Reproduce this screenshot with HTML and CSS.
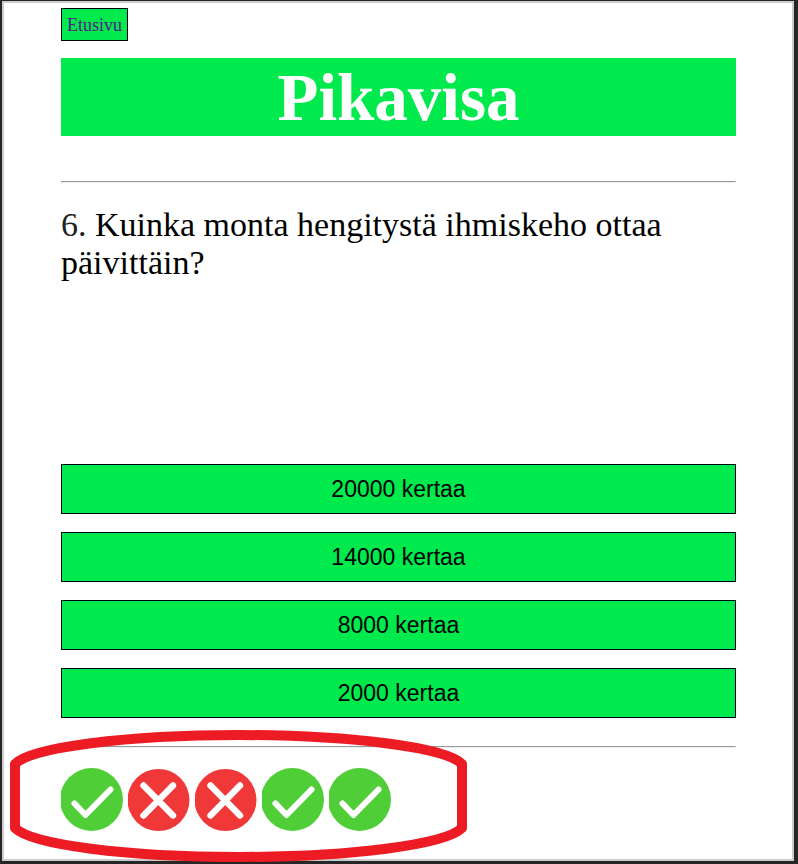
FILE: index.html
```html
<!DOCTYPE html>
<html lang="fi">
<head>
<meta charset="utf-8">
<title>Pikavisa</title>
<link rel="stylesheet" href="styles.css">
</head>
<body>
<svg class="symbols" aria-hidden="true">
  <symbol id="right" viewBox="0 0 62 63">
    <circle cx="30.500" cy="31.500" r="31.500" fill="#4fce37"/>
    <path d="M13.500 35.500 24.500 47 49.500 21.500" fill="none" stroke="#fff" stroke-width="6" stroke-linecap="round" stroke-linejoin="round"/>
  </symbol>
  <symbol id="wrong" viewBox="0 0 62 63">
    <circle cx="30.500" cy="32" r="31" fill="#f03838"/>
    <path d="M15.500 17.500 45 47.500M45 17.500 15.500 47.500" fill="none" stroke="#fff" stroke-width="6.400" stroke-linecap="round"/>
  </symbol>
</svg>
<div class="page">
  <nav><a class="home" href="#">Etusivu</a></nav>
  <h1 class="title">Pikavisa</h1>
  <hr>
  <main>
    <p class="question"><span class="number">6.</span> Kuinka monta hengitystä ihmiskeho ottaa päivittäin?</p>
    <div class="answers">
      <button class="answer" type="button">20000 kertaa</button>
      <button class="answer" type="button">14000 kertaa</button>
      <button class="answer" type="button">8000 kertaa</button>
      <button class="answer" type="button">2000 kertaa</button>
    </div>
  </main>
  <hr>
  <div class="results">
    <svg class="mark"><use href="#right"/></svg>
    <svg class="mark"><use href="#wrong"/></svg>
    <svg class="mark"><use href="#wrong"/></svg>
    <svg class="mark"><use href="#right"/></svg>
    <svg class="mark"><use href="#right"/></svg>
    <svg class="outline" viewBox="0 0 458 132" aria-hidden="true">
      <path d="M5 34A226 34 0 0 1 452 34V98A226 34 0 0 1 5 98Z" fill="none" stroke="#ed1c24" stroke-width="10" stroke-linejoin="round"/>
    </svg>
  </div>
</div>
</body>
</html>
```
FILE: styles.css
```css
* {
  box-sizing: border-box;
}

body {
  display: flex;
  min-height: 100vh;
  margin: 0;
  padding: 1px 4px 3px 2px;
  background: #262626;
  font-family: "Liberation Serif", "Times New Roman", serif;
}

.symbols {
  position: absolute;
  width: 0;
  height: 0;
}

.page {
  flex: 1;
  padding: 5px 56px 26px 57px;
  border: 2px solid #ccc;
  background: #fff;
}

nav {
  display: flex;
}

.home {
  padding: 6px 5px 4px;
  border: 1px solid #000;
  background: #00ea4e;
  color: #551a8b;
  font-size: 18px;
  line-height: 21px;
  text-decoration: none;
}

.title {
  margin: 17px 0 45px;
  background: #00ea4e;
  color: #fff;
  font-size: 67px;
  line-height: 78px;
  text-align: center;
}

hr {
  margin: 0;
}

.question {
  min-height: 211px;
  margin: 23px 0 47px;
  font-size: 34px;
  line-height: 38px;
}

.number {
  color: #222;
}

.answers {
  display: grid;
  gap: 18px;
  margin-bottom: 28px;
}

.answer {
  height: 50px;
  padding: 0;
  border: 1px solid #000;
  border-radius: 0;
  background: #00ea4e;
  color: #000;
  font-family: "Liberation Sans", Arial, sans-serif;
  font-size: 23px;
}

.results {
  position: relative;
  display: flex;
  gap: 5px;
  margin-top: 20px;
}

.mark {
  width: 62px;
  height: 63px;
}

.outline {
  position: absolute;
  top: -38px;
  left: -51px;
  width: 458px;
  height: 132px;
  overflow: visible;
  pointer-events: none;
}
```
